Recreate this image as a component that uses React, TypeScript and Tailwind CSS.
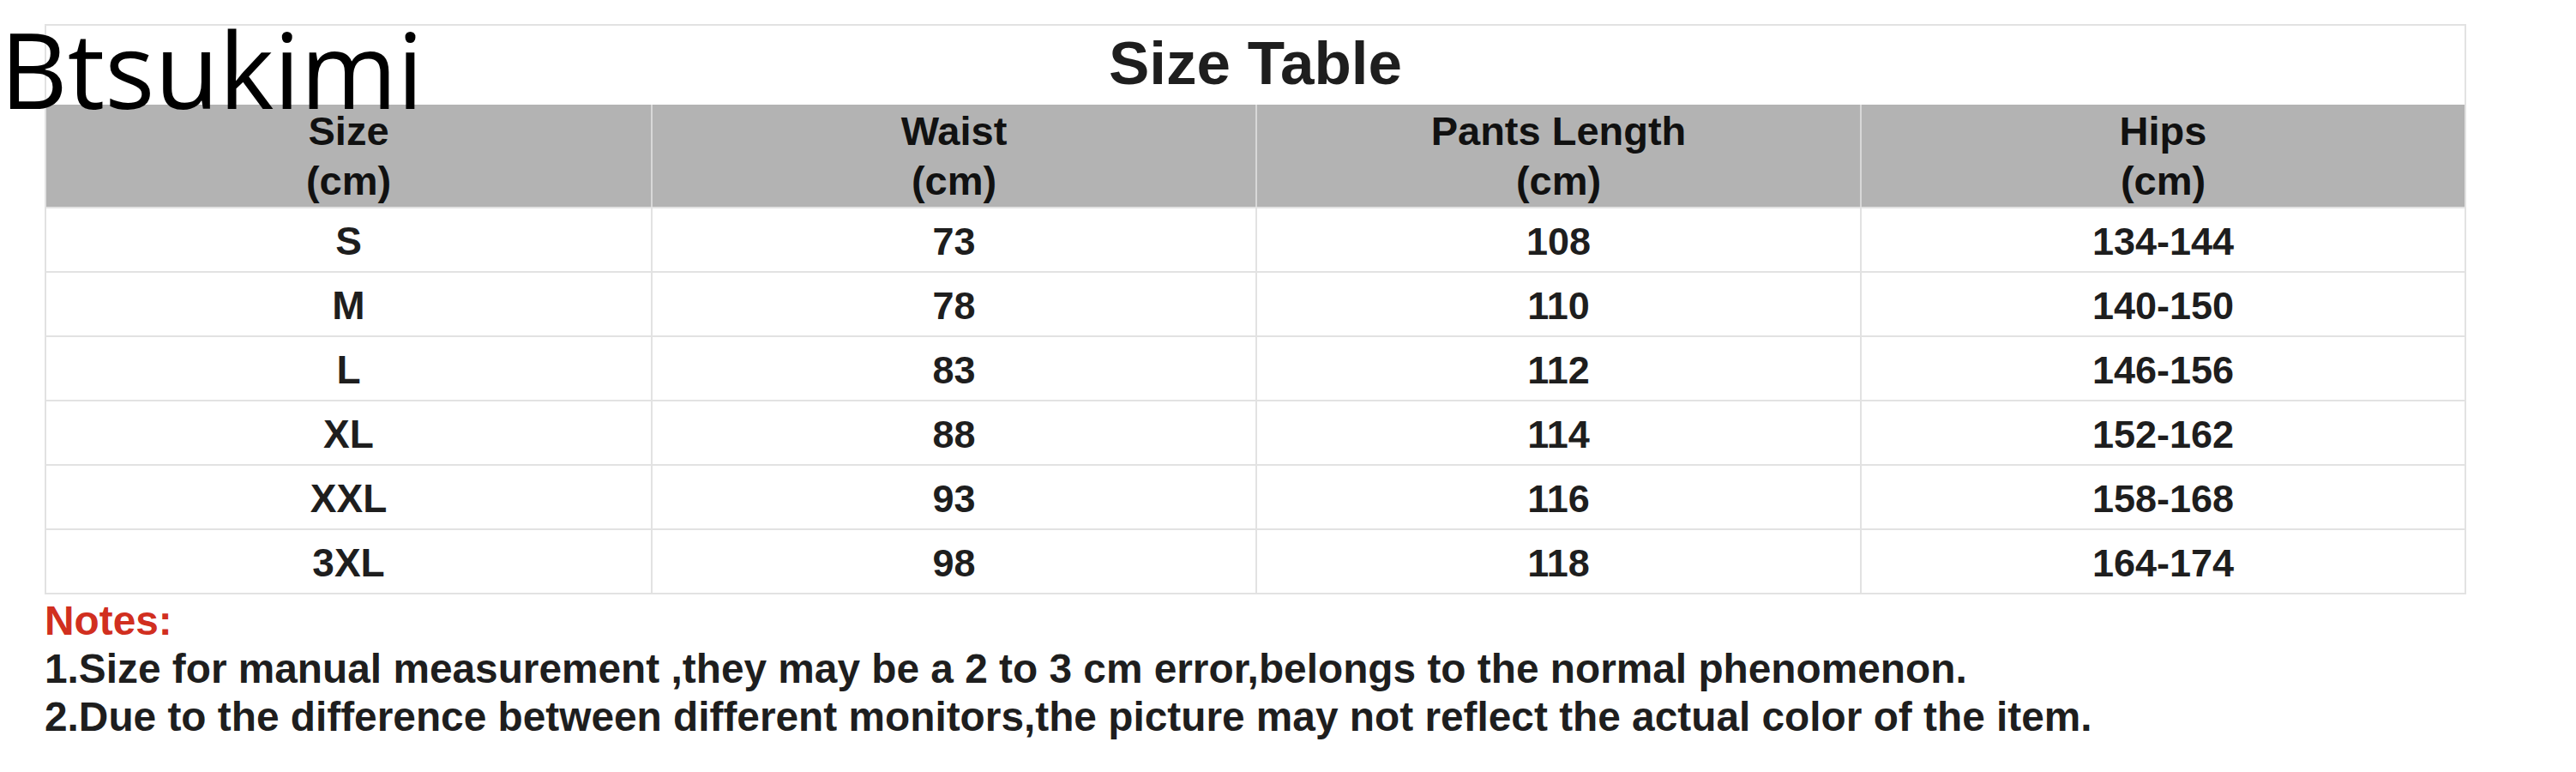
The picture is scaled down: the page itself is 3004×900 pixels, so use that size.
import React from "react";

const rows = [
  ["S", "73", "108", "134-144"],
  ["M", "78", "110", "140-150"],
  ["L", "83", "112", "146-156"],
  ["XL", "88", "114", "152-162"],
  ["XXL", "93", "116", "158-168"],
  ["3XL", "98", "118", "164-174"],
];

const headers = ["Size", "Waist", "Pants Length", "Hips"];

export default function App() {
  return (
    <div className="relative w-[3004px] h-[900px] bg-white font-['Liberation_Sans',Arial,sans-serif] text-[#1e1e1e]">
      {/* shop watermark over the table */}
      <div className="absolute left-0 top-[19px] font-['Open_Sans',sans-serif] text-[122px] leading-none text-black">
        Btsukimi
      </div>

      <div className="pl-[52px] pt-[28px]">
        <div className="w-[2824px] border-2 border-[#e2e2e2] font-bold">
          <div className="h-[92px] flex items-center justify-center pb-[6px] text-[71px] leading-none">
            Size Table
          </div>

          <div className="grid grid-cols-4 h-[119px] bg-[#b3b3b3]">
            {headers.map((h, i) => (
              <div
                key={h}
                className={
                  "flex flex-col items-center justify-center text-[47px] leading-[58px] text-[#111]" +
                  (i > 0 ? " border-l-2 border-[#d8d8d8]" : "")
                }
              >
                <span>{h}</span>
                <span>(cm)</span>
              </div>
            ))}
          </div>

          {rows.map((r) => (
            <div key={r[0]} className="grid grid-cols-4 h-[75px] border-t-2 border-[#e2e2e2]">
              {r.map((c, i) => (
                <div
                  key={i}
                  className={
                    "flex items-center justify-center pt-[3px] leading-none " +
                    (i === 0 ? "text-[46px]" : "text-[45px] border-l-2 border-[#e2e2e2]")
                  }
                >
                  {c}
                </div>
              ))}
            </div>
          ))}
        </div>

        <div className="mt-[3px] text-[47.8px] leading-[56px] font-bold">
          <div className="text-[#d12f1f]">Notes:</div>
          <div>1.Size for manual measurement ,they may be a 2 to 3 cm error,belongs to the normal phenomenon.</div>
          <div>2.Due to the difference between different monitors,the picture may not reflect the actual color of the item.</div>
        </div>
      </div>
    </div>
  );
}
